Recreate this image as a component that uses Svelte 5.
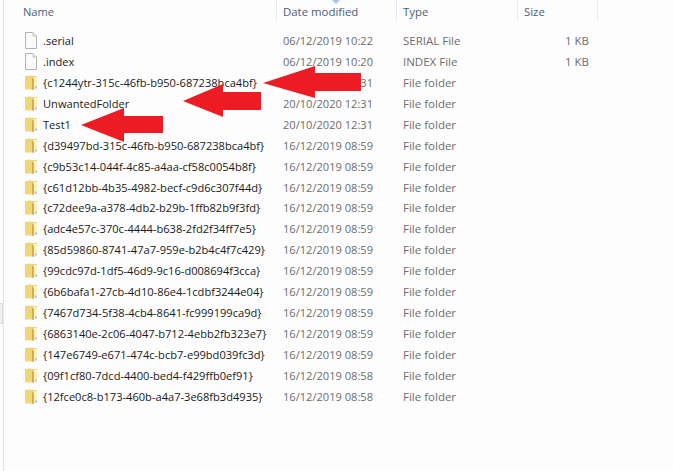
<script>
  const files = [
    { name: '.serial', date: '06/12/2019 10:22', type: 'SERIAL File', size: '1 KB', file: true },
    { name: '.index', date: '06/12/2019 10:20', type: 'INDEX File', size: '1 KB', file: true },
    { name: '{c1244ytr-315c-46fb-b950-687238bca4bf}', date: '20/10/2020 12:31' },
    { name: 'UnwantedFolder', date: '20/10/2020 12:31' },
    { name: 'Test1', date: '20/10/2020 12:31' },
    { name: '{d39497bd-315c-46fb-b950-687238bca4bf}', date: '16/12/2019 08:59' },
    { name: '{c9b53c14-044f-4c85-a4aa-cf58c0054b8f}', date: '16/12/2019 08:59' },
    { name: '{c61d12bb-4b35-4982-becf-c9d6c307f44d}', date: '16/12/2019 08:59' },
    { name: '{c72dee9a-a378-4db2-b29b-1ffb82b9f3fd}', date: '16/12/2019 08:59' },
    { name: '{adc4e57c-370c-4444-b638-2fd2f34ff7e5}', date: '16/12/2019 08:59' },
    { name: '{85d59860-8741-47a7-959e-b2b4c4f7c429}', date: '16/12/2019 08:59' },
    { name: '{99cdc97d-1df5-46d9-9c16-d008694f3cca}', date: '16/12/2019 08:59' },
    { name: '{6b6bafa1-27cb-4d10-86e4-1cdbf3244e04}', date: '16/12/2019 08:59' },
    { name: '{7467d734-5f38-4cb4-8641-fc999199ca9d}', date: '16/12/2019 08:59' },
    { name: '{6863140e-2c06-4047-b712-4ebb2fb323e7}', date: '16/12/2019 08:59' },
    { name: '{147e6749-e671-474c-bcb7-e99bd039fc3d}', date: '16/12/2019 08:59' },
    { name: '{09f1cf80-7dcd-4400-bed4-f429ffb0ef91}', date: '16/12/2019 08:58' },
    { name: '{12fce0c8-b173-460b-a4a7-3e68fb3d4935}', date: '16/12/2019 08:58' }
  ];
</script>

<div class="window">
  <div class="head">
    <div class="hc name">Name</div>
    <div class="hc date">Date modified</div>
    <div class="hc type">Type</div>
    <div class="hc size">Size</div>
  </div>
  <div class="rows">
    {#each files as f}
      <div class="row">
        <div class="cell name">
          {#if f.file}
            <svg class="ic" width="14" height="17" viewBox="0 0 14 17">
              <path d="M1.5 .5H9L12.5 4V16.5H1.5Z" fill="#fafafa" stroke="#b2b2b2"/>
              <path d="M9 .5V4H12.5" fill="#e8e8e8" stroke="#c8c8c8"/>
            </svg>
          {:else}
            <svg class="ic" width="14" height="17" viewBox="0 0 14 17">
              <path d="M3 2H13V15H3Z" fill="#ecd67c"/>
              <path d="M9 3H13V15H9Z" fill="#faf2bf"/>
              <path d="M1 2L7 1.5L8 3V15.5H1Z" fill="#f0d67a"/>
              <path d="M8 3L10 5V16L8 15.5Z" fill="#d2ae50"/>
              <path d="M11 12.5H13V14.5H11Z" fill="#a5cbe0"/>
            </svg>
          {/if}
          <span class="fname">{f.name}</span>
        </div>
        <div class="cell date">{f.date}</div>
        <div class="cell type">{f.type ?? 'File folder'}</div>
        <div class="cell size">{f.size ?? ''}</div>
      </div>
    {/each}
  </div>
  <div class="grip"></div>
  <svg class="chev" width="10" height="4" viewBox="0 0 10 4"><path d="M1 0H9L5 4Z" fill="#a9c7e2"/></svg>
  <svg class="arrows" width="673" height="471" viewBox="0 0 673 471">
    <path d="M263 83L315 66V73H361V91H315V98Z" fill="#ed1c24"/>
    <path d="M183 101L223 84V92H261V110H223V117Z" fill="#ed1c24"/>
    <path d="M81 125L124 108V116H163V133H124V142Z" fill="#ed1c24"/>
  </svg>
</div>

<style>
  :global(body) { margin: 0; background: #fff; }
  .window {
    position: relative;
    width: 673px;
    height: 471px;
    overflow: hidden;
    box-sizing: border-box;
    background: #fdfdfd;
    font-family: "Open Sans", "Liberation Sans", sans-serif;
    font-size: 11.1px;
    padding-left: 4px;
  }
  .window::before {
    content: "";
    position: absolute;
    left: 3px;
    top: 0;
    bottom: 0;
    width: 1px;
    background: #dfe8f2;
  }
  .head { display: flex; height: 21px; color: #4c607a; }
  .hc { box-sizing: border-box; padding: 4px 0 0 6px; border-right: 1px solid #e3ebf4; }
  .hc.name { width: 273px; padding-left: 19px; }
  .hc.date { width: 120px; font-size: 11.4px; }
  .hc.type { width: 121px; font-size: 11.4px; }
  .hc.size { width: 80px; font-size: 11.4px; }
  .rows { padding-top: 9px; }
  .row { display: flex; height: 20.94px; align-items: center; color: #6d6d6d; white-space: nowrap; }
  .cell { box-sizing: border-box; }
  .cell.name { width: 273px; display: flex; align-items: center; color: #1a1a1a; padding-left: 20px; gap: 5px; }
  .cell.date { width: 120px; padding-left: 6px; }
  .cell.type { width: 121px; padding-left: 6px; font-size: 11.5px; }
  .cell.size { width: 71px; text-align: right; font-size: 11.5px; }
  .ic { flex: none; }
  .grip {
    position: absolute;
    left: 0;
    top: 303px;
    width: 2px;
    height: 19px;
    background: #f0f0f0;
    border: 1px solid #dcdcdc;
    border-left: 0;
  }
  .chev { position: absolute; left: 331px; top: 0; }
  .arrows { position: absolute; left: 0; top: 0; pointer-events: none; }
</style>
